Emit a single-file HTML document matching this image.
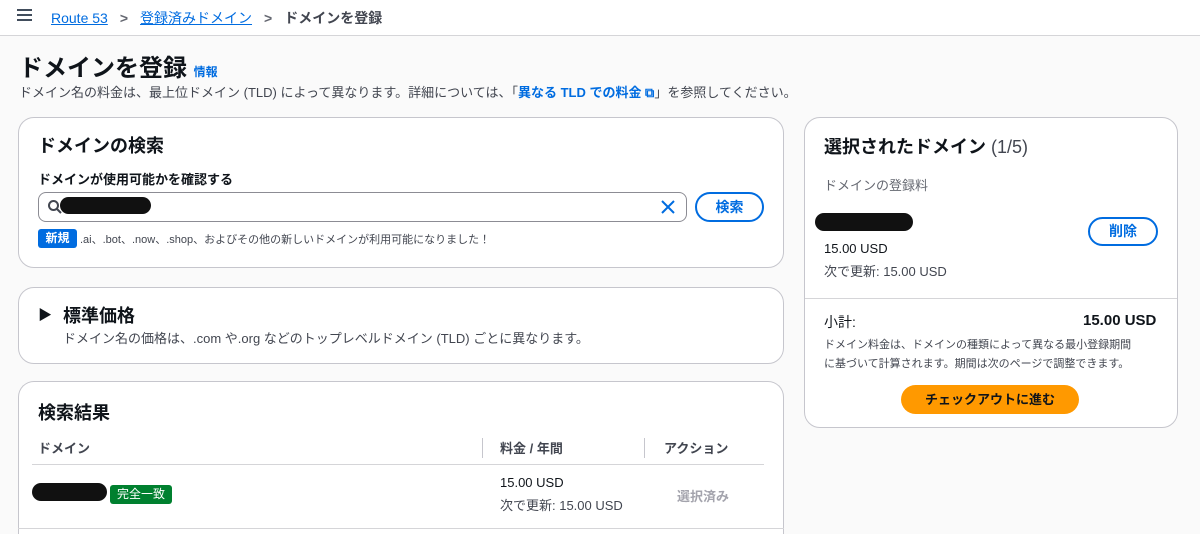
<!DOCTYPE html>
<html><head><meta charset="utf-8"><style>
*{margin:0;padding:0;box-sizing:border-box}
html,body{width:1200px;height:534px;overflow:hidden}
body{background:#fafafa;font-family:"Liberation Sans","Noto Sans CJK JP",sans-serif;color:#0f141a;position:relative}
.a{position:absolute;white-space:nowrap}
.card{position:absolute;background:#fff;border:1px solid #c6c6cd;border-radius:16px}
.blob{position:absolute;background:#111;border-radius:12px}
.lnk{color:#006ce0}
.btn{position:absolute;border:2px solid #006ce0;border-radius:20px;color:#006ce0;font-weight:bold;font-size:14px;text-align:center}
</style></head><body>
<div class="a" style="left:0;top:0;width:1200px;height:36px;background:#fff;border-bottom:1px solid #d5d5d8"></div>
<div class="a" style="left:17px;top:9px;width:15px;height:2px;background:#414d5c;box-shadow:0 5px 0 #414d5c,0 10px 0 #414d5c"></div>
<div class="a" style="left:51px;top:8px;font-size:14px"><span class="lnk" style="text-decoration:underline">Route 53</span><span style="color:#656871;margin:0 12px;font-weight:bold">&gt;</span><span class="lnk" style="text-decoration:underline">登録済みドメイン</span><span style="color:#656871;margin:0 12px;font-weight:bold">&gt;</span><span style="color:#424650;font-weight:bold">ドメインを登録</span></div>
<div class="a" style="left:19px;top:48px;font-size:24px;font-weight:bold">ドメインを登録 <span class="lnk" style="font-size:12px">情報</span></div>
<div class="a" style="left:19px;top:82px;font-size:13px;color:#424650">ドメイン名の料金は、最上位ドメイン (TLD) によって異なります。詳細については、「<span class="lnk" style="font-weight:bold">異なる TLD での料金 ⧉</span>」を参照してください。</div>

<div class="card" style="left:18px;top:117px;width:766px;height:151px"></div>
<div class="a" style="left:38px;top:132px;font-size:18px;font-weight:bold">ドメインの検索</div>
<div class="a" style="left:38px;top:169px;font-size:13px;font-weight:bold">ドメインが使用可能かを確認する</div>
<div class="a" style="left:38px;top:192px;width:649px;height:30px;border:1px solid #8c8c94;border-radius:8px;background:#fff"></div>
<svg class="a" style="left:47px;top:199px" width="16" height="16" viewBox="0 0 16 16"><circle cx="6.5" cy="6.5" r="4.5" fill="none" stroke="#424650" stroke-width="2"/><path d="M10 10l4 4" stroke="#424650" stroke-width="2"/></svg>
<div class="blob" style="left:60px;top:197px;width:91px;height:17px"></div>
<svg class="a" style="left:661px;top:200px" width="14" height="14" viewBox="0 0 14 14"><path d="M1 1l12 12M13 1L1 13" stroke="#006ce0" stroke-width="2"/></svg>
<div class="btn" style="left:695px;top:192px;width:69px;height:30px;line-height:26px">検索</div>
<div class="a" style="left:38px;top:229px;width:39px;height:19px;background:#006ce0;color:#fff;font-size:12px;font-weight:bold;border-radius:3px;text-align:center;line-height:19px">新規</div>
<div class="a" style="left:80px;top:231px;font-size:11px;color:#424650">.ai、.bot、.now、.shop、およびその他の新しいドメインが利用可能になりました！</div>

<div class="card" style="left:18px;top:287px;width:766px;height:77px"></div>
<div class="a" style="left:38px;top:305px;font-size:14px">▶</div>
<div class="a" style="left:63px;top:302px;font-size:18px;font-weight:bold">標準価格</div>
<div class="a" style="left:63px;top:328px;font-size:13px;color:#424650">ドメイン名の価格は、.com や.org などのトップレベルドメイン (TLD) ごとに異なります。</div>

<div class="card" style="left:18px;top:381px;width:766px;height:153px;border-bottom:none;border-radius:16px 16px 0 0"></div>
<div class="a" style="left:38px;top:399px;font-size:18px;font-weight:bold">検索結果</div>
<div class="a" style="left:38px;top:438px;font-size:13px;font-weight:bold;color:#424650">ドメイン</div>
<div class="a" style="left:482px;top:438px;width:1px;height:20px;background:#c6c6cd"></div>
<div class="a" style="left:500px;top:438px;font-size:13px;font-weight:bold;color:#424650">料金 / 年間</div>
<div class="a" style="left:644px;top:438px;width:1px;height:20px;background:#c6c6cd"></div>
<div class="a" style="left:664px;top:438px;font-size:13px;font-weight:bold;color:#424650">アクション</div>
<div class="a" style="left:32px;top:464px;width:732px;height:1px;background:#d5d5d8"></div>
<div class="blob" style="left:32px;top:483px;width:75px;height:18px"></div>
<div class="a" style="left:110px;top:485px;width:62px;height:19px;background:#00802f;color:#fff;font-size:12px;border-radius:3px;text-align:center;line-height:19px">完全一致</div>
<div class="a" style="left:500px;top:475px;font-size:13px">15.00 USD</div>
<div class="a" style="left:500px;top:495px;font-size:13px;color:#424650">次で更新: 15.00 USD</div>
<div class="a" style="left:677px;top:486px;font-size:13px;color:#a4a4ad;font-weight:bold">選択済み</div>
<div class="a" style="left:18px;top:528px;width:766px;height:1px;background:#d5d5d8"></div>

<div class="card" style="left:804px;top:117px;width:374px;height:311px"></div>
<div class="a" style="left:824px;top:133px;font-size:18px;font-weight:bold">選択されたドメイン <span style="font-weight:normal;color:#424650">(1/5)</span></div>
<div class="a" style="left:824px;top:175px;font-size:13px;color:#656871">ドメインの登録料</div>
<div class="blob" style="left:815px;top:213px;width:98px;height:18px"></div>
<div class="a" style="left:824px;top:241px;font-size:13px">15.00 USD</div>
<div class="a" style="left:824px;top:261px;font-size:13px;color:#424650">次で更新: 15.00 USD</div>
<div class="btn" style="left:1088px;top:217px;width:70px;height:29px;line-height:25px">削除</div>
<div class="a" style="left:805px;top:298px;width:372px;height:1px;background:#d5d5d8"></div>
<div class="a" style="left:824px;top:312px;font-size:14px">小計:</div>
<div class="a" style="left:1083px;top:312px;font-size:15px;font-weight:bold">15.00 USD</div>
<div class="a" style="left:824px;top:336px;font-size:11px;line-height:19px;color:#424650">ドメイン料金は、ドメインの種類によって異なる最小登録期間<br>に基づいて計算されます。期間は次のページで調整できます。</div>
<div class="a" style="left:901px;top:385px;width:178px;height:29px;background:#ff9900;border-radius:15px;text-align:center;line-height:29px;font-size:13px;font-weight:bold">チェックアウトに進む</div>
</body></html>
